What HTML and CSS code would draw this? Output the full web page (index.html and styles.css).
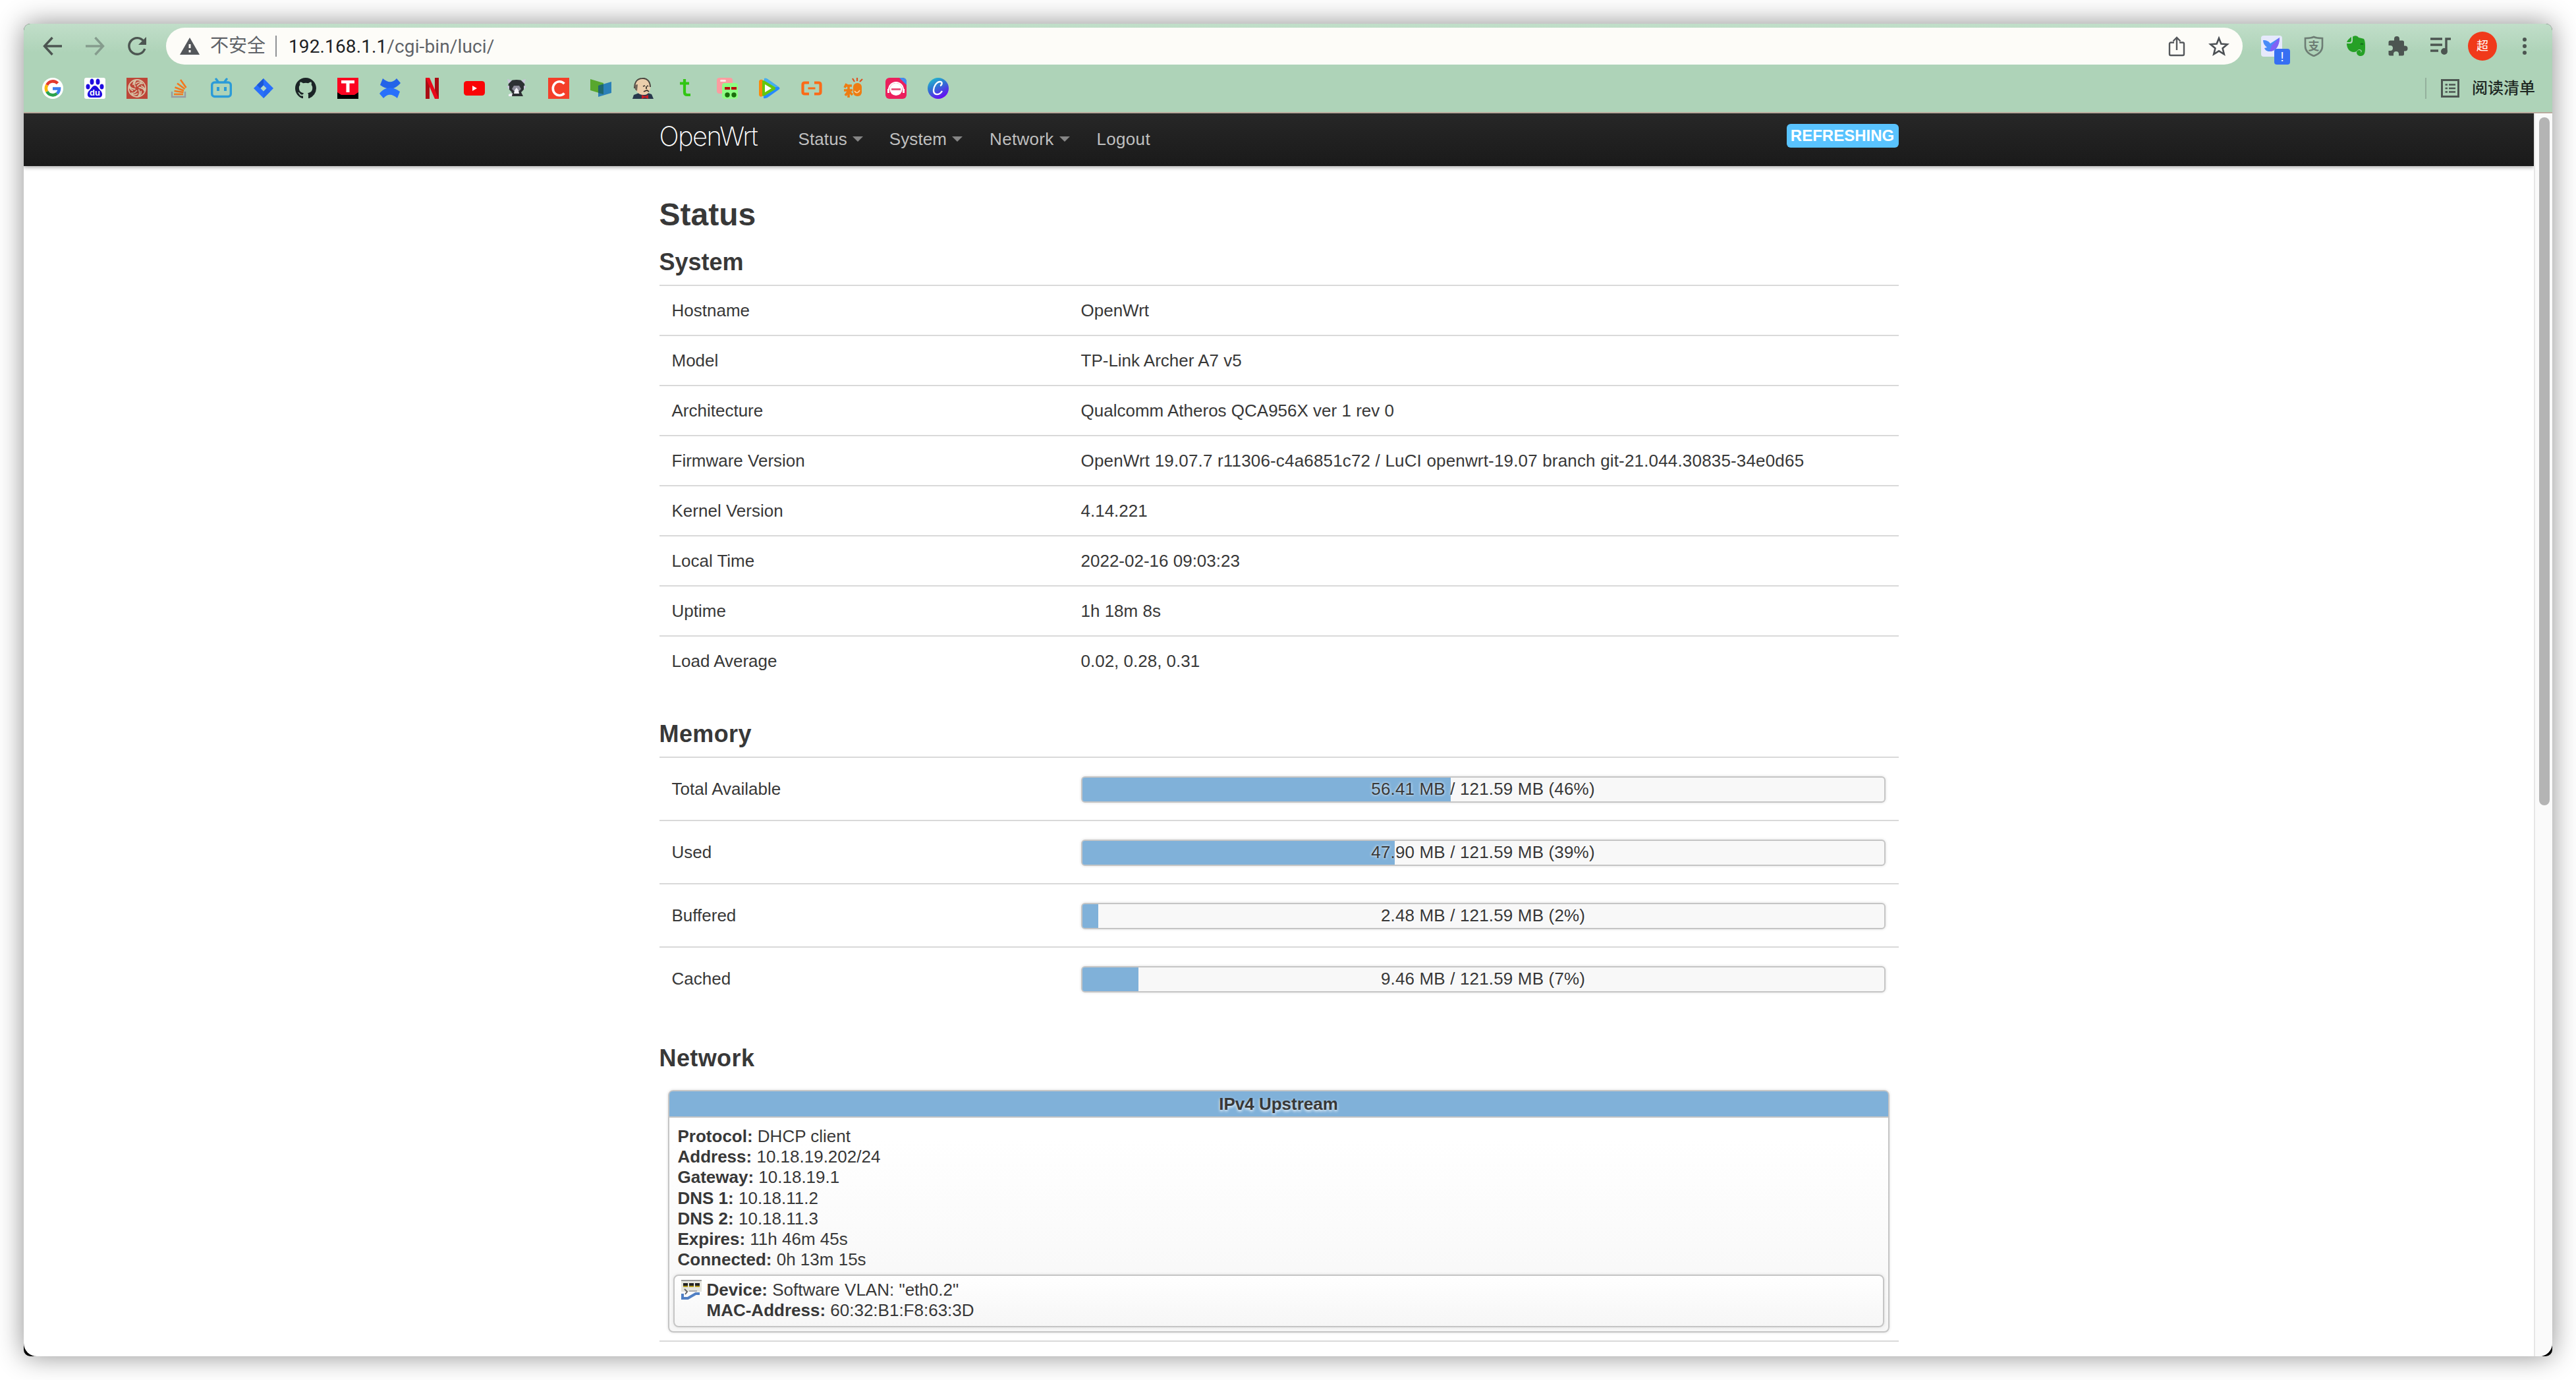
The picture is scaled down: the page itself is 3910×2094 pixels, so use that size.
FILE: index.html
```html
<!DOCTYPE html>
<html lang="en">
<head>
    <meta charset="UTF-8">
    <meta name="viewport" content="width=device-width, initial-scale=1.0">
    <title>OpenWrt - Overview - LuCI</title>
    <link rel="stylesheet" href="styles.css">
</head>
<body>
<div class="window">

    <!-- Browser toolbar -->
    <div class="chrome">
        <div class="toolbar">
            <div class="nav-buttons">
                <svg class="icon" viewBox="0 0 32 32"><path d="M30 16H4M15.500 3L3.500 16l12 13" fill="none" stroke="#4c5551" stroke-width="3.400"/></svg>
                <svg class="icon" viewBox="0 0 32 32"><path d="M2 16h26M16.500 3l12 13-12 13" fill="none" stroke="#859c8d" stroke-width="3.400"/></svg>
                <svg class="icon" viewBox="0 0 32 32"><path d="M26 8.500A12.300 12.300 0 1 0 27.800 20" fill="none" stroke="#4c5551" stroke-width="3.400"/><path d="M30 2v12H18z" fill="#4c5551"/></svg>
            </div>
            <div class="omnibox">
                <svg class="warn" viewBox="0 0 30 26"><path d="M15 0l15 26H0z" fill="#54575b"/><path d="M15 10v6M15 19v3.500" stroke="#fdfcf8" stroke-width="3"/></svg>
                <span class="insecure">不安全</span>
                <span class="omni-sep"></span>
                <span class="url"><b>192.168.1.1</b>/cgi-bin/luci/</span>
                <svg class="icon share" viewBox="0 0 32 32"><path d="M12 10.500H7a2 2 0 0 0-2 2V28a2 2 0 0 0 2 2h18a2 2 0 0 0 2-2V12.500a2 2 0 0 0-2-2h-5M16 22V3.500M10.500 8.500L16 3l5.500 5.500" fill="none" stroke="#54575b" stroke-width="2.400"/></svg>
                <svg class="icon" viewBox="0 0 32 32"><path d="M16 4l3.400 8.600 9.300.7-7.100 6 2.200 9-7.800-4.900-7.800 4.900 2.200-9-7.100-6 9.300-.7z" fill="none" stroke="#4c5054" stroke-width="2.600"/></svg>
            </div>
            <div class="extensions">
                <div class="ext">
                    <svg class="icon" viewBox="0 0 32 32"><rect width="32" height="32" rx="4" fill="#e6e9fc"/><path d="M3 7c6 0 9 2 11 5l14-9c0 11-5 21-15 21-4 0-7-2-8-5l4-1C5 15 3 11 3 7z" fill="#488cf8"/><path d="M28 3c0 11-5 21-15 21l3-9z" fill="#8062f5"/></svg>
                    <span class="ext-badge">!</span>
                </div>
                <svg class="icon" viewBox="0 0 32 32"><path d="M16 2c4 2 8 2 13 2v12c0 7-5 12-13 15C8 28 3 23 3 16V4c5 0 9 0 13-2z" fill="none" stroke="#6d7d74" stroke-width="2.600"/><text x="16" y="22" class="shield-text">支</text></svg>
                <svg class="icon" viewBox="0 0 32 32"><path d="M9 2v5a3 3 0 0 1-3 3H2c1-3 4-6 7-8zM11 2c1-2 7-3 9 1 3 1 6 1 8 2 2 3 2 8 2 13 0 8-1 13-7 13-7 0-8-9-2-9 3 0 3 3 2 4 3-1 2-5-2-5-3 0-3 4-8 4C5 25 2 18 2 12h5c3 0 4-2 4-5z" fill="#26a026"/><path d="M23 13.500q2-2 4 0" fill="none" stroke="#146b1c" stroke-width="2"/></svg>
                <svg class="icon" viewBox="0 0 32 32"><path d="M26.500 15.500H25V10a2.500 2.500 0 0 0-2.500-2.500H18V5a4 4 0 0 0-8 0v2.500H4A2.500 2.500 0 0 0 1.500 10v5H4a4 4 0 0 1 0 8H1.500v5A2.500 2.500 0 0 0 4 30.500h5V28a4 4 0 0 1 8 0v2.500h5.500A2.500 2.500 0 0 0 25 28v-4.500h1.500a4 4 0 0 0 0-8z" fill="#4c5551"/></svg>
                <svg class="icon" viewBox="0 0 32 32"><path d="M1 5h18M1 14h18M1 23h12M25 23V5h7" fill="none" stroke="#4c5551" stroke-width="3.400"/><circle cx="22" cy="24" r="5" fill="#4c5551"/></svg>
                <span class="avatar">超</span>
                <svg class="icon" viewBox="0 0 32 32"><g fill="#4c5551"><circle cx="16" cy="6" r="3"/><circle cx="16" cy="16" r="3"/><circle cx="16" cy="26" r="3"/></g></svg>
            </div>
        </div>

        <!-- Bookmarks -->
        <div class="bookmarks">
            <svg class="icon" viewBox="0 0 32 32"><circle cx="16" cy="16" r="16" fill="#fff"/><g fill="none" stroke-width="4.600"><path d="M23.500 8.500A10 10 0 0 0 7.300 11" stroke="#e33b2e"/><path d="M7.300 11a10 10 0 0 0 0 10" stroke="#f9b90c"/><path d="M7.300 21a10 10 0 0 0 15.200 3" stroke="#2ba24c"/><path d="M22.500 24a10 10 0 0 0 3.500-7.500H16" stroke="#3b7ded"/></g></svg>
            <svg class="icon" viewBox="0 0 32 32"><rect width="32" height="32" rx="3" fill="#fff"/><g fill="#1d0ce0"><ellipse cx="11.500" cy="6" rx="3" ry="4.500"/><ellipse cx="20.500" cy="6" rx="3" ry="4.500"/><ellipse cx="5.500" cy="13.500" rx="3" ry="4"/><ellipse cx="26.500" cy="13.500" rx="3" ry="4"/><path d="M16 12c4 0 5 4 8 7 4 3 5 11-2 11H10c-7 0-6-8-2-11 3-3 4-7 8-7z"/></g><text x="16" y="27" class="du">du</text></svg>
            <svg class="icon" viewBox="0 0 32 32"><rect width="32" height="32" fill="#bd4638"/><g fill="none" stroke="#d8c3a7" stroke-width="1.800"><circle cx="16" cy="16" r="13"/><path d="M16 13q5-6 9-4M18.500 14.500q8 1 9 6M18.500 17.500q3 7-1 11M16 19q-5 6-9 4M13.500 17.500q-8-1-9-6M13.500 14.500q-3-7 1-11M14 9q5-4 9-2M22 12q6 3 6 7M22 20q1 6-4 8M17 24q-5 3-9 1M10 20q-6-3-6-8M10 11q0-5 4-7"/></g></svg>
            <svg class="icon" viewBox="0 0 32 32"><path d="M5 21v8h20v-8" fill="none" stroke="#9a9aa1" stroke-width="2.400"/><g stroke="#f3781d" stroke-width="2.600"><path d="M8 25h14"/><path d="M8.500 20l14 2M9.500 14.500l13.500 5M13 8.500L24.500 17M18 3l8.500 12"/></g></svg>
            <svg class="icon" viewBox="0 0 32 32"><g fill="none" stroke="#2b9bd8" stroke-width="3.400" stroke-linecap="round"><rect x="1.700" y="7" width="28.600" height="21.500" rx="4"/><path d="M8 2l3 4M24 2l-3 4"/></g><path d="M9 14h4v6H9zM20 14h4v6h-4z" fill="#2b9bd8"/></svg>
            <svg class="icon" viewBox="0 0 32 32"><path d="M16 1l15 15-15 15L1 16z" fill="#2970fb"/><path d="M16 1v10l-5 5-5-5z" fill="#1b57d4"/><path d="M16 31V21l5-5 5 5z" fill="#256af0"/><path d="M16 11.500l4.500 4.500-4.500 4.500-4.500-4.500z" fill="#b3d8c4"/></svg>
            <svg class="icon" viewBox="0 0 16 16"><path fill="#1b2426" d="M8 0C3.580 0 0 3.580 0 8c0 3.540 2.290 6.530 5.470 7.590.4.070.55-.17.55-.38 0-.19-.01-.82-.01-1.490-2.010.37-2.530-.49-2.690-.94-.09-.23-.48-.94-.82-1.130-.28-.15-.68-.52-.01-.53.63-.01 1.080.58 1.230.82.72 1.210 1.870.87 2.330.66.070-.52.28-.87.51-1.070-1.780-.2-3.640-.89-3.640-3.950 0-.87.31-1.590.82-2.150-.08-.2-.36-1.020.08-2.120 0 0 .67-.21 2.200.82.64-.18 1.320-.27 2-.27s1.360.09 2 .27c1.530-1.040 2.200-.82 2.200-.82.44 1.100.16 1.920.08 2.120.51.56.82 1.270.82 2.150 0 3.070-1.870 3.750-3.650 3.950.29.25.54.73.54 1.480 0 1.070-.01 1.930-.01 2.200 0 .21.15.46.55.38A8.010 8.010 0 0 0 16 8c0-4.420-3.580-8-8-8z"/></svg>
            <svg class="icon" viewBox="0 0 32 32"><rect width="32" height="32" fill="#fb0421"/><path d="M0 22l6 4h20l6-4v10H0z" fill="#000"/><path d="M6 4h20v4.500h-7.500V22h-5V8.500H6z" fill="#fff"/></svg>
            <svg class="icon" viewBox="0 0 32 32"><path d="M5 1c7 6 14 8 21 0l6 7c-9 11-20 11-31 3z" fill="#2463e8"/><path d="M27 31C20 25 13 23 6 31l-6-7c9-11 20-11 31-3z" fill="#2970fb"/></svg>
            <svg class="icon" viewBox="0 0 32 32"><path d="M6 0h6v32H6zM20 0h6v32h-6z" fill="#a90d14"/><path d="M6 0h6l14 32h-6z" fill="#e9091a"/></svg>
            <svg class="icon" viewBox="0 0 32 32"><rect y="5" width="32" height="22" rx="4.500" fill="#f90406"/><path d="M13 12l7 4-7 4z" fill="#fff"/></svg>
            <svg class="icon" viewBox="0 0 32 32"><path d="M5 5q11-4 22 0c2 6 2 11-1 14l-3 3 3 6H6l3-6-3-3C3 16 3 11 5 5z" fill="#2d3033"/><path d="M2 2l7 2-5 5zM30 2l-7 2 5 5zM1 13l4-1v6zM31 13l-4-1v6z" fill="#c8c5d8"/><path d="M12 12h8l3 5-3 3h-8l-3-3z" fill="#8d8b99"/><path d="M13 19l3-4 3 4 1 5h-8zM4 25l6-2-1 5H4z" fill="#f0f0f5"/></svg>
            <svg class="icon" viewBox="0 0 32 32"><rect width="32" height="32" fill="#f43e29"/><path d="M24.500 9A10 10.500 0 1 0 24.500 23.500" fill="none" stroke="#fff" stroke-width="3.600"/></svg>
            <svg class="icon" viewBox="0 0 32 32"><path d="M0 2l20 6v17L0 19z" fill="#58a72d"/><path d="M12 12l20-6v17l-20 6z" fill="#2b80b8"/><path d="M12 12l8-2.500V25l-8-2z" fill="#20686d"/></svg>
            <svg class="icon" viewBox="0 0 32 32"><path d="M0 32l2-6 8-3h13l6 2 3 7z" fill="#28394c"/><path d="M4 10c2-6 7-9 12-9 8 0 11 6 11 13 0 6-3 12-9 12C10 27 3 20 4 10z" fill="#ebceab"/><path d="M3 16C3 6 8 1 15 1c7-1 12 5 12 13" fill="none" stroke="#4d463f" stroke-width="2"/><path d="M3 11l5-1-1 10-3-2z" fill="#6f6357"/><path d="M16 13l3-1M22 12l2 1M17 21l5-2 3 2M21 13v4" fill="none" stroke="#3a332d" stroke-width="1.800"/><path d="M14 26l5 2 5-2v6l-5-2-5 2z" fill="#c81f26"/></svg>
            <svg class="icon" viewBox="0 0 32 32"><path d="M15 2v20q0 4 4 4h5M8 8.500h14" fill="none" stroke="#31c613" stroke-width="4.200"/></svg>
            <svg class="icon" viewBox="0 0 32 32"><rect width="24" height="24" rx="4" fill="#fb9ca0"/><rect x="5" y="3" width="9" height="3" rx="1.500" fill="#fde6e4"/><rect x="8" y="8" width="24" height="24" rx="4" fill="#8dff83"/><path d="M12 14h8v4h-8zM22 14h8v4h-8z" fill="#b80c0c"/><g fill="#1a6d0c"><circle cx="16" cy="26" r="3.700"/><circle cx="26" cy="26" r="3.700"/></g></svg>
            <svg class="icon" viewBox="0 0 32 32"><path d="M8 1q2-1 5 1l17 12q3 2 0 4L13 30q-4 2-6 1z" fill="#258aff"/><path d="M8 1q2-1 5 1l17 12H10z" fill="#45b0ef"/><path d="M0 5q1-3 5-2l4 3v20l-4 2q-4 2-5-2z" fill="#fb8a0c"/><path d="M5 5q0-2 4 0l15 9q2 2 0 4L9 27q-4 2-4-1z" fill="#65c70c"/><path d="M9 10l10 6-10 6z" fill="#fff"/></svg>
            <svg class="icon" viewBox="0 0 32 32"><path d="M12 7.500H5.500q-3 0-3 3v11q0 3 3 3H12M20 7.500h6.500q3 0 3 3v11q0 3-3 3H20" fill="none" stroke="#fb6a17" stroke-width="4.200"/><path d="M10.500 16h11" stroke="#fb6a17" stroke-width="3"/></svg>
            <svg class="icon" viewBox="0 0 32 32"><path d="M5 9l-3 6M3 12h10M1 19h13M8 11v19M8 20l-5 7M8 20l6 6" fill="none" stroke="#ee7c12" stroke-width="3.600"/><rect x="15" y="8" width="13" height="20" rx="6" fill="#ee7c12"/><path d="M17 20q4 6 8-1" fill="none" stroke="#f8d6a8" stroke-width="1.600"/><path d="M14 1l3 5M21 0v5M29 2l-4 4" stroke="#e0501e" stroke-width="2.200"/></svg>
            <svg class="icon" viewBox="0 0 32 32"><rect width="32" height="32" rx="6" fill="#eb1f5c"/><path d="M21 0h5q6 0 6 6v5z" fill="#3d8cf0"/><path d="M5 18a11 11 0 0 1 22 0" fill="none" stroke="#fff" stroke-width="2"/><circle cx="16" cy="17.500" r="9.500" fill="#fff"/><path d="M3 17h3v6H3zM26 17h3v6h-3z" fill="#fff"/><path d="M9 16h14v3H9z" fill="#e9597f"/></svg>
            <svg class="icon" viewBox="0 0 32 32"><defs><linearGradient id="canva" x1="0" y1="0" x2=".5" y2="1"><stop offset="0" stop-color="#1fc8cc"/><stop offset=".5" stop-color="#2f74d2"/><stop offset="1" stop-color="#6411f2"/></linearGradient></defs><circle cx="16" cy="16" r="16" fill="url(#canva)"/><path d="M19 12c3-1 4-6 0-6-6 0-10 8-10 13 0 8 9 8 13 1" fill="none" stroke="#fff" stroke-width="2.400"/></svg>
            <div class="reading-list">
                <svg class="icon" viewBox="0 0 32 32"><g fill="none" stroke="#4c5551"><path d="M3.500 3.500h25v25h-25z" stroke-width="3"/><path d="M8.500 10.500h3.500M14 10.500h10M8.500 16h3.500M14 16h10M8.500 21.500h3.500M14 21.500h10" stroke-width="2.600"/></g></svg>
                <span>阅读清单</span>
            </div>
        </div>
    </div>

    <!-- LuCI page -->
    <div class="viewport">
        <div class="page">
            <header>
                <div class="container">
                    <a class="brand">OpenWrt</a>
                    <ul class="nav">
                        <li class="dropdown">Status</li>
                        <li class="dropdown">System</li>
                        <li class="dropdown">Network</li>
                        <li>Logout</li>
                    </ul>
                    <span class="label">REFRESHING</span>
                </div>
            </header>

            <div class="container maincontent">
                <h2>Status</h2>

                <h3>System</h3>
                <div class="table">
                    <div class="tr"><div class="td">Hostname</div><div class="td">OpenWrt</div></div>
                    <div class="tr"><div class="td">Model</div><div class="td">TP-Link Archer A7 v5</div></div>
                    <div class="tr"><div class="td">Architecture</div><div class="td">Qualcomm Atheros QCA956X ver 1 rev 0</div></div>
                    <div class="tr"><div class="td">Firmware Version</div><div class="td firmware">OpenWrt 19.07.7 r11306-c4a6851c72 / LuCI openwrt-19.07 branch git-21.044.30835-34e0d65</div></div>
                    <div class="tr"><div class="td">Kernel Version</div><div class="td">4.14.221</div></div>
                    <div class="tr"><div class="td">Local Time</div><div class="td">2022-02-16 09:03:23</div></div>
                    <div class="tr"><div class="td">Uptime</div><div class="td">1h 18m 8s</div></div>
                    <div class="tr"><div class="td">Load Average</div><div class="td">0.02, 0.28, 0.31</div></div>
                </div>

                <h3 class="wide">Memory</h3>
                <div class="table">
                    <div class="tr"><div class="td">Total Available</div><div class="td"><div class="progress"><div class="bar" style="width:46%"></div><span>56.41 MB / 121.59 MB (46%)</span></div></div></div>
                    <div class="tr"><div class="td">Used</div><div class="td"><div class="progress"><div class="bar" style="width:39%"></div><span>47.90 MB / 121.59 MB (39%)</span></div></div></div>
                    <div class="tr"><div class="td">Buffered</div><div class="td"><div class="progress"><div class="bar" style="width:2%"></div><span>2.48 MB / 121.59 MB (2%)</span></div></div></div>
                    <div class="tr"><div class="td">Cached</div><div class="td"><div class="progress"><div class="bar" style="width:7%"></div><span>9.46 MB / 121.59 MB (7%)</span></div></div></div>
                </div>

                <h3 class="wide">Network</h3>
                <div class="network-status">
                    <div class="ifacebox">
                        <div class="ifacebox-head">IPv4 Upstream</div>
                        <div class="ifacebox-body">
                            <div><strong>Protocol:</strong> DHCP client</div>
                            <div><strong>Address:</strong> 10.18.19.202/24</div>
                            <div><strong>Gateway:</strong> 10.18.19.1</div>
                            <div><strong>DNS 1:</strong> 10.18.11.2</div>
                            <div><strong>DNS 2:</strong> 10.18.11.3</div>
                            <div><strong>Expires:</strong> 11h 46m 45s</div>
                            <div><strong>Connected:</strong> 0h 13m 15s</div>
                        </div>
                        <div class="ifacebadge">
                            <svg class="icon" viewBox="0 0 32 32"><path d="M1 1h31v17H1z" fill="#e4e4dc"/><path d="M1 1h31" stroke="#999" stroke-width="2"/><g fill="#222"><path d="M4 5h7v6H4zM13 5h7v6h-7zM22 5h7v6h-7z"/></g><path d="M4 9h7v2H4zM13 9h7v2h-7zM22 9h7v2h-7z" fill="#b39b1c"/><path d="M6 14l4 4-3 4" fill="none" stroke="#666" stroke-width="2"/><path d="M3 21v7h8l12-7h6" fill="none" stroke="#5180c4" stroke-width="4"/><path d="M13 17h12" stroke="#aaa" stroke-width="2"/></svg>
                            <div>
                                <div><strong>Device:</strong> Software VLAN: "eth0.2"</div>
                                <div><strong>MAC-Address:</strong> 60:32:B1:F8:63:3D</div>
                            </div>
                        </div>
                    </div>
                </div>
            </div>
        </div>
        <div class="scrollbar"><div class="thumb"></div></div>
    </div>

</div>
</body>
</html>
```
FILE: styles.css
```css
* {
    box-sizing: border-box;
}
body {
    margin: 0;
    padding: 36px;
    width: 3910px;
    height: 2094px;
    overflow: hidden;
    background: #fff;
    color: #383838;
    font-family: "Liberation Sans", Arial, "Noto Sans CJK SC", sans-serif;
    font-size: 26px;
    line-height: 36px;
}

/* Browser window */
.window {
    display: flex;
    flex-direction: column;
    width: 3838px;
    height: 2022px;
    border-radius: 10px;
    background: #000;
    box-shadow: 0 0 40px rgba(0, 0, 0, 0.45);
}
.icon {
    display: block;
    flex: none;
    width: 32px;
    height: 32px;
}
.chrome {
    height: 136px;
    border-radius: 10px 10px 0 0;
    border-bottom: 2px solid #b9aa9d;
    background: linear-gradient(#c1dec9, #aed3b8 44px);
}
.toolbar {
    display: flex;
    align-items: center;
    height: 68px;
}
.nav-buttons {
    display: flex;
    gap: 32px;
    width: 216px;
    padding-left: 28px;
}
.omnibox {
    display: flex;
    align-items: center;
    width: 3152px;
    height: 56px;
    padding: 0 20px 0 21px;
    border-radius: 28px;
    background: #fdfcf8;
    color: #5f6368;
    font-family: Roboto, "Noto Sans CJK SC", sans-serif;
    font-size: 28px;
}
.warn {
    width: 30px;
    height: 26px;
    margin-right: 16px;
}
.insecure {
    width: 84px;
}
.omni-sep {
    width: 2px;
    height: 32px;
    margin: 0 18px 0 15px;
    background: #8f9194;
}
.url {
    padding-top: 2px;
    letter-spacing: 0.12px;
}
.url b {
    color: #202124;
    font-weight: 400;
}
.share {
    margin-left: auto;
    margin-right: 32px;
}
.extensions {
    display: flex;
    align-items: center;
    gap: 32px;
    padding-left: 28px;
}
.ext {
    position: relative;
}
.ext-badge {
    position: absolute;
    left: 20px;
    top: 20px;
    width: 24px;
    height: 24px;
    border-radius: 4px;
    background: #376ff2;
    color: #fff;
    font-size: 20px;
    line-height: 25px;
    text-align: center;
}
.shield-text {
    fill: #6d7d74;
    font-size: 17px;
    font-weight: 700;
    text-anchor: middle;
}
.avatar {
    width: 44px;
    height: 44px;
    margin: 0 -6px;
    border-radius: 50%;
    background: #f03a1a;
    color: #fff;
    font-size: 18px;
    line-height: 44px;
    text-align: center;
}
.bookmarks {
    display: flex;
    align-items: center;
    gap: 32px;
    height: 60px;
    padding: 0 26px 0 28px;
}
.du {
    fill: #fff;
    font-size: 13px;
    font-weight: 700;
    text-anchor: middle;
}
.reading-list {
    display: flex;
    align-items: center;
    gap: 17px;
    height: 32px;
    margin-left: auto;
    padding-left: 20px;
    border-left: 2px solid #94b09c;
    color: #202924;
    font-size: 24px;
    font-weight: 500;
    line-height: 32px;
}

/* Page and scrollbar */
.viewport {
    display: flex;
    flex: 1;
    overflow: hidden;
    border-radius: 0 0 20px 20px;
    background: #fff;
}
.page {
    flex: 1;
}
.scrollbar {
    width: 28px;
    padding: 6px 4px 0 6px;
    border-left: 2px solid #e6e6e6;
    background: #fafafa;
}
.thumb {
    height: 1044px;
    border-radius: 8px;
    background: #b4b4b4;
}

/* Header */
header {
    height: 80px;
    background: linear-gradient(#272727, #1a1a1a);
    box-shadow: 0 2px 6px rgba(0, 0, 0, 0.35);
}
.container {
    width: 1881px;
    margin: 0 auto;
}
header .container {
    display: flex;
    align-items: flex-start;
}
.brand {
    width: 211px;
    padding-top: 17px;
    color: #fff;
    font-family: Inter, "Liberation Sans", sans-serif;
    font-size: 40px;
    font-weight: 200;
    letter-spacing: -1.6px;
    line-height: 36px;
}
.nav {
    display: flex;
    gap: 40px;
    margin: 0;
    padding: 21px 0 0;
    list-style: none;
    color: #bfbfbf;
    letter-spacing: 0.1px;
}
.nav li:nth-child(n + 3) {
    margin-left: 1px;
    letter-spacing: 0.3px;
}
.dropdown::after {
    content: "";
    display: inline-block;
    margin-left: 8px;
    border: 8px solid transparent;
    border-top-color: #858585;
    border-bottom: 0;
    vertical-align: 5px;
}
.label {
    width: 170px;
    height: 36px;
    margin: 16px 0 0 auto;
    border-radius: 6px;
    background: #59c3fe;
    color: #fff;
    font-size: 24px;
    font-weight: 700;
    line-height: 35px;
    text-align: center;
}

/* Content */
.maincontent {
    padding-top: 36px;
}
h2,
h3 {
    height: 72px;
    margin: 0;
    line-height: 76px;
}
h2 {
    font-size: 48px;
}
h3 {
    font-size: 36px;
}
.wide {
    letter-spacing: 0.4px;
}
.table {
    margin-bottom: 36px;
}
.tr {
    display: flex;
    align-items: center;
    border-top: 2px solid #d9d9d9;
}
.td {
    flex: 1;
    padding: 19px 20px 19px;
}
.td:first-child {
    flex: none;
    width: 620px;
    padding-left: 19px;
}
.firmware {
    letter-spacing: 0.17px;
}
.progress {
    position: relative;
    height: 40px;
    margin: 9px 0 7px;
    border: 2px solid #c5c5c5;
    border-radius: 6px;
    background: #f8f8f8;
    box-shadow: 0 0 4px #ddd;
    text-align: center;
}
.bar {
    height: 36px;
    border-radius: 3px 0 0 3px;
    background: #80b1d9;
}
.progress span {
    position: absolute;
    left: 0;
    right: 0;
    top: -1px;
    letter-spacing: 0.16px;
    text-shadow: 0 0 4px #fff;
}

/* Interface box */
.network-status {
    padding: 14px 14px 12px 13px;
    border-bottom: 2px solid #d9d9d9;
}
.ifacebox {
    border: 2px solid #c5c5c5;
    border-radius: 8px;
    background: linear-gradient(#fff 20%, #f6f6f6);
    box-shadow: 0 0 4px #ddd;
    line-height: 31px;
}
.ifacebox-head {
    height: 40px;
    border-bottom: 2px solid #c5c5c5;
    border-radius: 5px 5px 0 0;
    background: #80b1d9;
    font-weight: 700;
    line-height: 39px;
    text-align: center;
    text-shadow: 0 2px 4px #fff;
}
.ifacebox-body {
    height: 238px;
    padding: 13px 13px 0;
    line-height: 31.2px;
}
.ifacebadge {
    display: flex;
    gap: 8px;
    height: 80px;
    margin: 0 6px 6px;
    padding: 6px 9px;
    border: 2px solid #c5c5c5;
    border-radius: 8px;
    background: linear-gradient(#fff, #f6f6f6);
    box-shadow: 0 0 4px #ddd;
}
```
